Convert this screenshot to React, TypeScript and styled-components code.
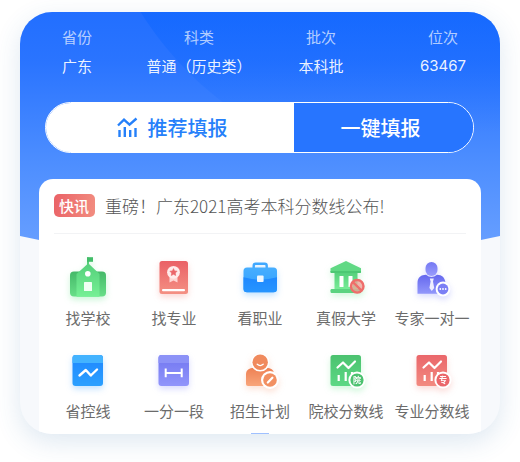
import React from "react";
import styled, { createGlobalStyle } from "styled-components";

const GlobalStyle = createGlobalStyle`
  *, *::before, *::after { box-sizing: border-box; }
  body {
    margin: 0;
    background: #fff;
    font-family: "Noto Sans CJK SC", "Noto Sans", sans-serif;
  }
`;

const Page = styled.div`
  display: flow-root;
`;

const Card = styled.main`
  position: relative;
  isolation: isolate;
  overflow: hidden;
  margin: 12px 20px 28px;
  padding-top: 15px;
  border-radius: 32px;
  background: #f7f9fc;
  box-shadow: 0 8px 26px rgba(50, 110, 170, 0.16);
`;

const Backdrop = styled.div`
  position: absolute;
  z-index: -1;
  inset: 0 0 auto;
  height: 274px;
  overflow: hidden;
  background: linear-gradient(#226fff 0, #2a74ff 50px, #4d8eff 150px, #669eff 230px);
  clip-path: polygon(0 0, 100% 0, 100% 224px, 50% 274px, 0 224px);

  &::before {
    content: "";
    position: absolute;
    left: 69px;
    top: -520px;
    width: 680px;
    height: 680px;
    border-radius: 50%;
    background: linear-gradient(rgba(10, 100, 255, 0.5) 520px, rgba(20, 105, 255, 0) 640px);
  }
`;

const Profile = styled.dl`
  display: grid;
  grid-template-columns: repeat(4, 1fr);
  margin: 0 -4px;
  text-align: center;
  font-size: 15px;
  line-height: 20px;
  white-space: nowrap;
`;

const Field = styled.div`
  display: grid;
  gap: 9px;
`;

const FieldName = styled.dt`
  color: rgba(255, 255, 255, 0.68);
`;

const FieldValue = styled.dd<{ $numeric?: boolean }>`
  margin: 0;
  color: rgba(255, 255, 255, 0.92);
  font-family: ${(p) => (p.$numeric ? '"Inter", sans-serif' : "inherit")};
`;

const Actions = styled.div`
  display: flex;
  height: 51px;
  margin: 26px 26px 26px 25px;
  overflow: hidden;
  border: 1px solid #fff;
  border-radius: 26px;
`;

const Action = styled.button<{ $primary?: boolean }>`
  display: flex;
  flex: ${(p) => (p.$primary ? "244 0 0" : "173 0 0")};
  align-items: center;
  justify-content: center;
  gap: 10px;
  padding: ${(p) => (p.$primary ? "0 0 0 4px" : "0 6px 0 0")};
  border: 0;
  background: ${(p) => (p.$primary ? "#fff" : "#2775ff")};
  color: ${(p) => (p.$primary ? "#2580fa" : "#fff")};
  font: 500 20px/28px "Noto Sans CJK SC", sans-serif;
  cursor: pointer;
`;

const Panel = styled.section`
  margin: 0 19px;
  border-radius: 14px 14px 0 0;
  background: #fff;
`;

const News = styled.a`
  display: flex;
  align-items: center;
  gap: 10px;
  margin: 0 15px;
  padding: 15px 0 16px;
  border-bottom: 1px solid #f2f3f5;
  color: #555;
  font-size: 17px;
  line-height: 23px;
  font-weight: 300;
  text-decoration: none;
  white-space: nowrap;
`;

const Tag = styled.span`
  padding: 0 6px 0 5px;
  border-radius: 5px;
  background: linear-gradient(100deg, #ea6267, #f28d80);
  color: #fff;
  font-size: 15px;
  font-weight: 500;
`;

const Services = styled.nav`
  display: grid;
  grid-template-columns: repeat(5, 1fr);
  row-gap: 19px;
  padding: 20px 6px 12px;
`;

const Service = styled.a`
  display: grid;
  justify-items: center;
  gap: 6px;
  color: #6b6b6b;
  font-size: 15px;
  line-height: 20px;
  text-decoration: none;
  white-space: nowrap;
`;

const Glyph = styled.svg<{ $glow: string }>`
  display: block;
  width: 48px;
  height: 48px;
  overflow: visible;
  filter: drop-shadow(0 3px 3px ${(p) => p.$glow});
`;

const PageMark = styled.div`
  width: 18px;
  height: 1px;
  margin: 0 auto;
  background: #9fc0ff;
`;

type Tone = { id: string; from: string; to: string };

const Fade = ({ id, from, to }: Tone) => (
  <linearGradient id={id} x1="0" y1="0" x2="0" y2="1">
    <stop offset="0" stopColor={from} />
    <stop offset="1" stopColor={to} />
  </linearGradient>
);

const SchoolIcon = () => (
  <Glyph viewBox="0 0 48 48" $glow="rgba(90,225,130,.3)" aria-hidden>
    <defs>
      <Fade id="school" from="#4fca76" to="#76f095" />
      <Fade id="wing" from="#45b969" to="#68df88" />
    </defs>
    <rect x="6" y="17.5" width="36" height="25" rx="4" fill="url(#wing)" />
    <path d="M23 3.5h2v6.6L35.5 20v22.7h-23V20L23 10.5z" fill="url(#school)" />
    <path d="M23 3.2h6v4.6h-6z" fill="#42bd68" />
    <circle cx="23.8" cy="19.8" r="2.8" fill="#fff" />
    <rect x="20" y="28" width="8" height="9" rx=".6" fill="#effff3" />
  </Glyph>
);

const MajorIcon = () => (
  <Glyph viewBox="0 0 48 48" $glow="rgba(240,110,100,.28)" aria-hidden>
    <defs><Fade id="major" from="#ea6166" to="#f49083" /></defs>
    <rect x="9.5" y="7" width="28.5" height="33" rx="2.5" fill="url(#major)" />
    <path d="M19.5 22v6.5l4-2 4 2V22z" fill="#ffd6d3" />
    <circle cx="23.5" cy="18.3" r="6.4" fill="#ffeceb" />
    <path d="m23.5 14.6 1.1 2.3 2.5.3-1.8 1.8.4 2.5-2.2-1.2-2.2 1.2.4-2.5-1.8-1.8 2.5-.3z" fill="#eb666a" stroke="#eb666a" strokeWidth=".6" />
    <rect x="12" y="35" width="23" height="2.3" rx="1" fill="#fff" />
  </Glyph>
);

const JobIcon = () => (
  <Glyph viewBox="0 0 48 48" $glow="rgba(40,150,255,.28)" aria-hidden>
    <defs>
      <Fade id="jobTop" from="#46aeff" to="#2f9eff" />
      <Fade id="jobLow" from="#1e88ff" to="#2795ff" />
    </defs>
    <path d="M17.7 15v-3.2a2 2 0 0 1 2-2h9a2 2 0 0 1 2 2V15" fill="none" stroke="#3fa8ff" strokeWidth="2.4" />
    <rect x="7.5" y="13.5" width="33.5" height="24.7" rx="3.5" fill="url(#jobTop)" />
    <path d="M7.5 23.3Q24 28 41 23.3v11.4a3.5 3.5 0 0 1-3.5 3.5H11a3.5 3.5 0 0 1-3.5-3.5z" fill="url(#jobLow)" />
    <rect x="21" y="21.5" width="6.6" height="6.6" rx="1" fill="#eef7ff" />
  </Glyph>
);

const CollegeIcon = () => (
  <Glyph viewBox="0 0 48 48" $glow="rgba(90,225,130,.28)" aria-hidden>
    <defs><Fade id="college" from="#55cf7b" to="#79ee98" /></defs>
    <path d="M12.5 18h23v18h-23z" fill="url(#college)" />
    <path d="M24 7 39 14.2V18a1 1 0 0 1-1 1H9.5a1 1 0 0 1-1-1v-3.8z" fill="#60d984" />
    <path d="M8.5 17H39v1a1 1 0 0 1-1 1H9.5a1 1 0 0 1-1-1z" fill="#4cc873" />
    <rect x="8.5" y="35" width="30.5" height="4" rx="1.2" fill="#5bd380" />
    <rect x="17.5" y="22" width="4" height="11" rx=".5" fill="#fff" />
    <rect x="26.5" y="22" width="4" height="11" rx=".5" fill="#fff" />
    <circle cx="35.2" cy="32.3" r="6.3" fill="#f3a19a" fillOpacity=".75" stroke="#ef6d6a" strokeWidth="2.4" />
    <path d="m30.8 28 8.8 8.6" stroke="#ef6d6a" strokeWidth="2.4" />
  </Glyph>
);

const ExpertIcon = () => (
  <Glyph viewBox="0 0 48 48" $glow="rgba(120,125,250,.28)" aria-hidden>
    <defs>
      <Fade id="expert" from="#6568ee" to="#9297fb" />
      <Fade id="expertHead" from="#7377f3" to="#9a9dfc" />
    </defs>
    <path d="M9.5 39.8V29c0-6 4-8 8.5-8.2q5.5 4.5 11 0C34 21 37 23.5 37.5 29v10.8z" fill="url(#expert)" />
    <path d="M21.8 24.5h4l-.8 3 1.2 6.5-2.4 3-2.4-3 1.2-6.5z" fill="#eef" />
    <rect x="17.5" y="8" width="12" height="14" rx="6" fill="url(#expertHead)" />
    <circle cx="35" cy="35" r="7.4" fill="#fff" />
    <circle cx="35" cy="35" r="5.4" fill="#7b7ff5" />
    <g fill="#fff">
      <circle cx="32.3" cy="35" r=".9" />
      <circle cx="35" cy="35" r=".9" />
      <circle cx="37.7" cy="35" r=".9" />
    </g>
  </Glyph>
);

const ProvinceIcon = () => (
  <Glyph viewBox="0 0 48 48" $glow="rgba(40,150,255,.28)" aria-hidden>
    <defs><Fade id="province" from="#1e86ff" to="#2ba0ff" /></defs>
    <rect x="8.5" y="8" width="30.5" height="31" rx="3" fill="url(#province)" />
    <path d="M8.5 16v-5a3 3 0 0 1 3-3H36a3 3 0 0 1 3 3v5z" fill="#43b3ff" />
    <path d="m15.5 28.5 6.3-5.5 5 5.5 6.2-6" fill="none" stroke="#fff" strokeWidth="2.4" strokeLinecap="round" strokeLinejoin="round" />
  </Glyph>
);

const SegmentIcon = () => (
  <Glyph viewBox="0 0 48 48" $glow="rgba(120,125,250,.28)" aria-hidden>
    <defs><Fade id="segment" from="#7176f0" to="#9195fb" /></defs>
    <rect x="8.5" y="8" width="30.5" height="31" rx="3" fill="url(#segment)" />
    <path d="M8.5 16v-5a3 3 0 0 1 3-3H36a3 3 0 0 1 3 3v5z" fill="#8c92f7" />
    <path d="M15.7 21.5v8.8M31.7 21.5v8.8M15.7 26h16" fill="none" stroke="#fff" strokeWidth="2" />
  </Glyph>
);

const PlanIcon = () => (
  <Glyph viewBox="0 0 48 48" $glow="rgba(245,140,95,.25)" aria-hidden>
    <defs><Fade id="plan" from="#ee8154" to="#f8a57a" /></defs>
    <path d="M10 37V27.5c0-4 2.5-6 6-6.5h16c4 .5 6 2.5 6 6.5V39H12a2 2 0 0 1-2-2z" fill="url(#plan)" />
    <circle cx="24.2" cy="15.3" r="9.3" fill="#fff" />
    <circle cx="24.2" cy="15.3" r="7.7" fill="#f08a5d" />
    <path d="M21.2 17.3q3 2.6 6 0" fill="none" stroke="#fff" strokeWidth="1.3" strokeLinecap="round" />
    <circle cx="34" cy="33" r="9" fill="#fff" />
    <circle cx="34" cy="33" r="6.8" fill="#f29062" />
    <path d="m31.8 35.5 4.6-4.8" stroke="#fff" strokeWidth="2.2" strokeLinecap="round" />
  </Glyph>
);

const ScoreIcon = ({ id, from, to, glow, mark }: Tone & { glow: string; mark: string }) => (
  <Glyph viewBox="0 0 48 48" $glow={glow} aria-hidden>
    <defs><Fade id={id} from={from} to={to} /></defs>
    <rect x="8.5" y="8" width="30.5" height="31" rx="2.5" fill={`url(#${id})`} />
    <path d="m15.5 20.5 5.5-5 5.5 5.5 6.5-6.5" fill="none" stroke="#fff" strokeWidth="2.2" strokeLinecap="round" strokeLinejoin="round" />
    <path d="M16.7 28v6M23.7 25v9M30 25v4" fill="none" stroke="#fff" strokeWidth="2.2" />
    <circle cx="35" cy="33" r="8.6" fill="#fff" />
    <circle cx="35" cy="33" r="6.6" fill={from} />
    <text x="35" y="36" fontSize="8" fontWeight="700" fill="#fff" textAnchor="middle">{mark}</text>
  </Glyph>
);

const TrendIcon = () => (
  <svg width="21" height="21" viewBox="0 0 21 21" fill="none" stroke="currentColor" strokeWidth="2.4" aria-hidden>
    <path d="m1 8.5 6-5.8 5.5 5 7-6.2" />
    <path d="M2.5 13v7M7.8 10v10M13.2 13v7M18.5 11v9" />
  </svg>
);

const fields = [
  { name: "省份", value: "广东" },
  { name: "科类", value: "普通（历史类）" },
  { name: "批次", value: "本科批" },
  { name: "位次", value: "63467", numeric: true },
];

const services = [
  { label: "找学校", icon: <SchoolIcon /> },
  { label: "找专业", icon: <MajorIcon /> },
  { label: "看职业", icon: <JobIcon /> },
  { label: "真假大学", icon: <CollegeIcon /> },
  { label: "专家一对一", icon: <ExpertIcon /> },
  { label: "省控线", icon: <ProvinceIcon /> },
  { label: "一分一段", icon: <SegmentIcon /> },
  { label: "招生计划", icon: <PlanIcon /> },
  { label: "院校分数线", icon: <ScoreIcon id="collegeScore" from="#4bc26f" to="#5cd884" glow="rgba(90,225,130,.28)" mark="院" /> },
  { label: "专业分数线", icon: <ScoreIcon id="majorScore" from="#ea666a" to="#f28a80" glow="rgba(240,110,100,.25)" mark="专" /> },
];

export default function App() {
  return (
    <Page>
      <GlobalStyle />
      <Card>
        <Backdrop />
        <Profile>
          {fields.map((f) => (
            <Field key={f.name}>
              <FieldName>{f.name}</FieldName>
              <FieldValue $numeric={f.numeric}>{f.value}</FieldValue>
            </Field>
          ))}
        </Profile>
        <Actions>
          <Action type="button" $primary>
            <TrendIcon />
            推荐填报
          </Action>
          <Action type="button">一键填报</Action>
        </Actions>
        <Panel>
          <News href="#news">
            <Tag>快讯</Tag>
            重磅！广东2021高考本科分数线公布!
          </News>
          <Services>
            {services.map((s) => (
              <Service key={s.label} href="#service">
                {s.icon}
                {s.label}
              </Service>
            ))}
          </Services>
          <PageMark />
        </Panel>
      </Card>
    </Page>
  );
}
